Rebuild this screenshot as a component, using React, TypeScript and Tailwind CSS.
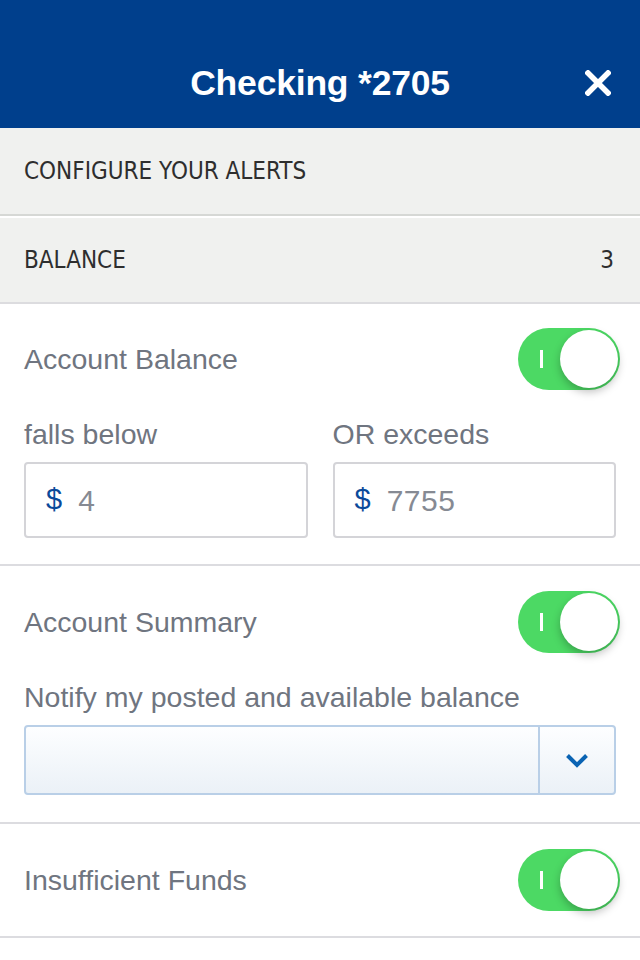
import React from 'react';

const sans = { fontFamily: '"Liberation Sans", Arial, sans-serif' };
const condensed = { fontFamily: '"DejaVu Sans Condensed", "DejaVu Sans", sans-serif', fontStretch: 'condensed' as const };

const Toggle: React.FC = () => (
    <div className="relative h-[62px] w-[102px] shrink-0 rounded-full bg-[#4cd964]">
        <div className="absolute top-1/2 left-[22px] h-[18px] w-[3px] -translate-y-1/2 bg-white" />
        <div className="absolute top-[2px] right-[2px] h-[58px] w-[58px] rounded-full bg-white shadow-[0_4px_8px_rgba(0,0,0,0.25)]" />
    </div>
);

const MoneyInput: React.FC<{ value: string }> = ({ value }) => (
    <div className="flex h-[76px] flex-1 items-center rounded-[4px] border-2 border-[#d4d4d8] bg-white pl-[20px]">
        <span className="text-[29px] text-[#0b4a9a]">$</span>
        <span className="ml-[16px] text-[30px] tracking-[0.5px] text-[#868a93]">{value}</span>
    </div>
);

const App: React.FC = () => {
    return (
        <div className="min-h-[960px] w-[640px] bg-white" style={sans}>
            {/* Header */}
            <header className="relative flex h-[128px] items-center justify-center bg-[#003f8c] pt-[40px] text-white">
                <h1 className="text-[35.5px] font-bold tracking-[-0.2px]">Checking *2705</h1>
                <button className="absolute right-[29px] bottom-[32px]">
                    <svg width="26" height="26" viewBox="0 0 26 26">
                        <path d="M3 3 L23 23 M23 3 L3 23" stroke="white" strokeWidth="5.5" strokeLinecap="square" />
                    </svg>
                </button>
            </header>

            <div className="flex h-[88px] items-center border-b-2 border-[#d6d8d5] bg-[#f0f1ef] px-6 text-[24px] text-[#2e2e2e]" style={condensed}>
                CONFIGURE YOUR ALERTS
            </div>
            <div className="mt-[2px] flex h-[86px] items-center justify-between border-b-2 border-[#dcdcdf] bg-[#f0f1ef] px-6 text-[24px] text-[#2e2e2e]" style={condensed}>
                <span>BALANCE</span>
                <span className="mr-[2px]">3</span>
            </div>

            {/* Account Balance */}
            <section className="border-b-2 border-[#dcdce0] px-6 pt-[24px] pb-[26px] text-[#6f7580]">
                <div className="flex h-[62px] items-center justify-between">
                    <span className="text-[28.5px]">Account Balance</span>
                    <div className="-mr-[4px]">
                        <Toggle />
                    </div>
                </div>
                <div className="mt-[28px] flex gap-[25px] text-[28.5px] leading-[32px]">
                    <span className="flex-1">falls below</span>
                    <span className="flex-1">OR exceeds</span>
                </div>
                <div className="mt-[12px] flex gap-[25px]">
                    <MoneyInput value="4" />
                    <MoneyInput value="7755" />
                </div>
            </section>

            {/* Account Summary */}
            <section className="border-b-2 border-[#dcdce0] px-6 pt-[25px] pb-[27px] text-[#6f7580]">
                <div className="flex h-[62px] items-center justify-between">
                    <span className="text-[28.5px]">Account Summary</span>
                    <div className="-mr-[4px]">
                        <Toggle />
                    </div>
                </div>
                <div className="mt-[28px] text-[28.5px] leading-[32px]">Notify my posted and available balance</div>
                <div className="mt-[12px] flex h-[70px] rounded-[4px] border-2 border-[#b9cfe7] bg-gradient-to-b from-[#fdfeff] to-[#ebf1f7]">
                    <div className="flex-1" />
                    <div className="flex w-[76px] items-center justify-center border-l-2 border-[#b9cfe7]">
                        <svg width="24" height="15" viewBox="0 0 24 15">
                            <path d="M2.5 2.5 L12 12 L21.5 2.5" fill="none" stroke="#0a63b3" strokeWidth="4" />
                        </svg>
                    </div>
                </div>
            </section>

            {/* Insufficient Funds */}
            <section className="border-b-2 border-[#dcdce0] px-6 pt-[25px] pb-[25px] text-[#6f7580]">
                <div className="flex h-[62px] items-center justify-between">
                    <span className="text-[28.5px]">Insufficient Funds</span>
                    <div className="-mr-[4px]">
                        <Toggle />
                    </div>
                </div>
            </section>
        </div>
    );
};

export default App;
